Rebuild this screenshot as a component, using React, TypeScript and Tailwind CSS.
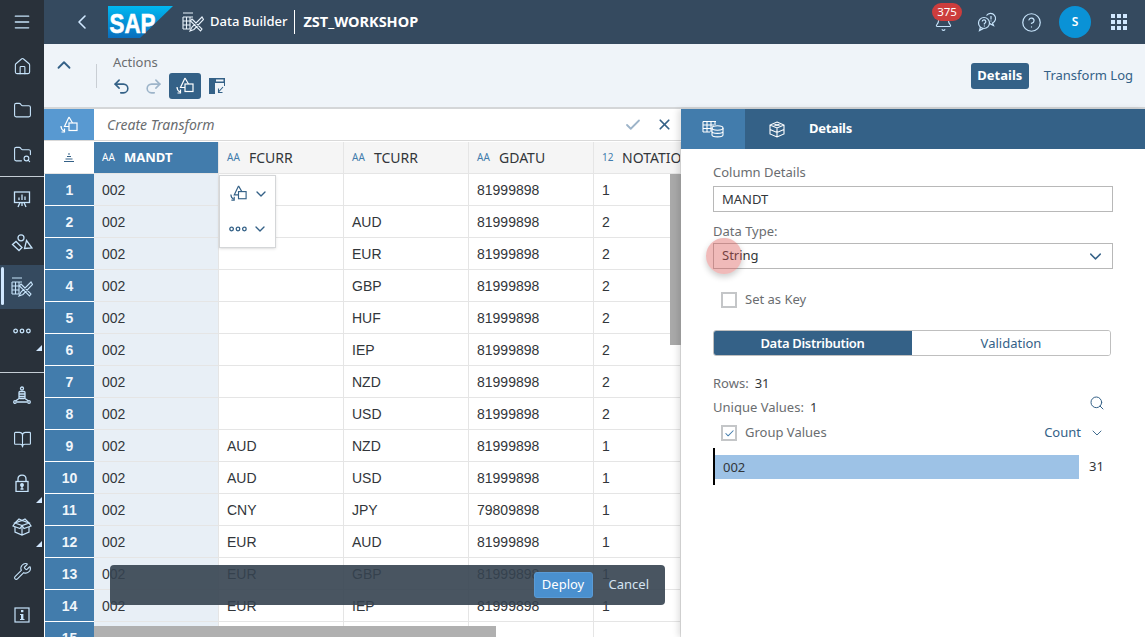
import React from 'react';
import {
  Menu, House, Folder, FolderSearch, BookOpen, Wrench,
  Bell, CircleHelp, Undo2, Redo2, ChevronUp, ChevronLeft, ChevronDown, Check, X, Search,
} from 'lucide-react';

const NAV = '#c6e3fa';
const BLUE = '#346187';

const ROWS = [
  ['', '', '81999898', '1'],
  ['', 'AUD', '81999898', '2'],
  ['', 'EUR', '81999898', '2'],
  ['', 'GBP', '81999898', '2'],
  ['', 'HUF', '81999898', '2'],
  ['', 'IEP', '81999898', '2'],
  ['', 'NZD', '81999898', '2'],
  ['', 'USD', '81999898', '2'],
  ['AUD', 'NZD', '81999898', '1'],
  ['AUD', 'USD', '81999898', '1'],
  ['CNY', 'JPY', '79809898', '1'],
  ['EUR', 'AUD', '81999898', '1'],
  ['EUR', 'GBP', '81999898', '1'],
  ['EUR', 'IEP', '81999898', '1'],
  ['', '', '', ''],
];

// triangle + square with the little arrow, used for the transform actions
function TransformIcon({ color, size = 20 }: { color: string; size?: number }) {
  return (
    <svg width={size} height={size} viewBox="0 0 20 20" fill="none" stroke={color} strokeWidth="1.2">
      <path d="M10 2 L5.5 11.5 H10 M10 2 L13.5 8" />
      <rect x="10" y="8" width="8" height="7.5" />
      <path d="M2 11 C2 13.5 3 15 5 16" />
      <path d="M5.5 13.5 V17 H2.5" />
    </svg>
  );
}

function DotsIcon({ color }: { color: string }) {
  return (
    <svg width="18" height="6" viewBox="0 0 18 6" fill="none" stroke={color} strokeWidth="1.3">
      <circle cx="2.6" cy="3" r="1.8" />
      <circle cx="9" cy="3" r="1.8" />
      <circle cx="15.4" cy="3" r="1.8" />
    </svg>
  );
}

function TableToolsIcon({ color }: { color: string }) {
  return (
    <svg width="22" height="20" viewBox="0 0 22 20" fill="none" stroke={color} strokeWidth="1.1">
      <path d="M1 1 H11 M1 5 H11 M1 9 H9 M1 13 H8 M1 17 H8 M1 5 V17 M4.5 5 V17 M8 5 V17" />
      <path d="M10 7 L20 17 L18.5 19 L8.5 9 Z M20 5 L10 15 L8 19 L12 17.5 L21.5 7.5 Z" />
    </svg>
  );
}

function NetworkIcon({ color }: { color: string }) {
  return (
    <svg width="18" height="18" viewBox="0 0 18 18" fill="none" stroke={color} strokeWidth="1.3">
      <circle cx="9" cy="2.5" r="1.5" />
      <rect x="6" y="5.5" width="6" height="7" rx="1" />
      <path d="M6 8 H12 M6 10.5 H12 M6 12.5 L2.5 15 M12 12.5 L15.5 15 M4 16 H14" />
      <circle cx="2" cy="16" r="1.3" />
      <circle cx="16" cy="16" r="1.3" />
    </svg>
  );
}

function BoardIcon({ color }: { color: string }) {
  return (
    <svg width="18" height="18" viewBox="0 0 18 18" fill="none" stroke={color} strokeWidth="1.3">
      <rect x="1.5" y="2" width="15" height="10.5" />
      <path d="M6 10 V7.5 M9 10 V4.5 M12 10 V6.5 M7 12.5 L5 17 M11 12.5 L13 17 M9 12.5 V16" />
    </svg>
  );
}

function ShapesIcon({ color }: { color: string }) {
  return (
    <svg width="22" height="18" viewBox="0 0 22 18" fill="none" stroke={color} strokeWidth="1.3">
      <circle cx="10" cy="3.8" r="3" />
      <path d="M1.5 10.5 L5 7.5 L11 13.5 L8 16.5 Z" />
      <path d="M15.5 6.5 L21 14 L13.5 14.5 Z" />
    </svg>
  );
}

function LockIcon({ color }: { color: string }) {
  return (
    <svg width="14" height="18" viewBox="0 0 14 18" fill="none" stroke={color} strokeWidth="1.3">
      <rect x="1" y="7.5" width="12" height="10" />
      <path d="M3 7.5 V5 C3 -0.2 11 -0.2 11 5 V7.5" />
      <circle cx="7" cy="11" r="1.3" fill={color} />
      <path d="M7 12 V15 M5.5 15 H8.5" />
    </svg>
  );
}

function BoxIcon({ color }: { color: string }) {
  return (
    <svg width="20" height="18" viewBox="0 0 20 18" fill="none" stroke={color} strokeWidth="1.2">
      <path d="M10 7.5 L3 5 L10 2.5 L17 5 Z" />
      <path d="M3 5 L1 8 L8 10.5 L10 7.5 L12 10.5 L19 8 L17 5" />
      <path d="M3 9 V14 L10 17 L17 14 V9 M10 8 V17" />
      <path d="M3 5 L7 1 L10 2.5 L13 1 L17 5" />
    </svg>
  );
}

function InfoBoxIcon({ color }: { color: string }) {
  return (
    <svg width="16" height="16" viewBox="0 0 16 16" fill="none">
      <rect x="1" y="1" width="14" height="14" stroke={color} strokeWidth="1.2" />
      <rect x="7" y="3" width="2.4" height="2.2" fill={color} />
      <path d="M6 7 H9.4 V12 H10.5 V13 H6 V12 H7 V8 H6 Z" fill={color} />
    </svg>
  );
}

function NavItem({ children, active, corner }: { children: React.ReactNode; active?: boolean; corner?: boolean }) {
  return (
    <div className={`relative h-11 flex items-center justify-center ${active ? 'bg-[#354a5f]' : ''}`}>
      {active && <div className="absolute left-[1px] top-[2px] bottom-[4px] w-[3px] rounded-sm bg-[#d1e8ff]" />}
      {children}
      {corner && <div className="absolute right-[2px] bottom-[2px] w-0 h-0 border-l-[6px] border-l-transparent border-b-[6px] border-b-[#d1e8ff]" />}
    </div>
  );
}

function Sidebar() {
  const p = { size: 19, color: NAV, strokeWidth: 1.4 };
  return (
    <div className="w-11 shrink-0 bg-[#29313a] flex flex-col">
      <NavItem><Menu size={20} color={NAV} strokeWidth={1.6} /></NavItem>
      <NavItem><House {...p} /></NavItem>
      <NavItem><Folder {...p} /></NavItem>
      <NavItem><FolderSearch {...p} /></NavItem>
      <div className="h-px bg-[#c4ccd4]" />
      <NavItem><BoardIcon color={NAV} /></NavItem>
      <NavItem><ShapesIcon color={NAV} /></NavItem>
      <NavItem active><TableToolsIcon color={NAV} /></NavItem>
      <NavItem corner><DotsIcon color={NAV} /></NavItem>
      <div className="h-[19px]" />
      <div className="h-px bg-[#c4ccd4]" />
      <NavItem><NetworkIcon color={NAV} /></NavItem>
      <NavItem><BookOpen {...p} /></NavItem>
      <NavItem corner><LockIcon color={NAV} /></NavItem>
      <NavItem corner><BoxIcon color={NAV} /></NavItem>
      <NavItem><Wrench {...p} /></NavItem>
      <NavItem><InfoBoxIcon color={NAV} /></NavItem>
    </div>
  );
}

function ShellBar() {
  return (
    <div className="h-11 shrink-0 bg-[#354a5f] flex items-center text-white relative">
      <div className="w-[64px] flex justify-end"><ChevronLeft size={24} color="#d1e8ff" strokeWidth={1.6} className="mr-[14px]" /></div>
      <svg width="65" height="32" viewBox="0 0 65 32">
        <defs>
          <linearGradient id="sap" x1="0" y1="0" x2="0" y2="1">
            <stop offset="0" stopColor="#00b8f1" />
            <stop offset="1" stopColor="#0a6ebd" />
          </linearGradient>
        </defs>
        <polygon points="0,0 65,0 32,32 0,32" fill="url(#sap)" />
        <text x="1.5" y="27" fill="#fff" stroke="#fff" strokeWidth="0.6" fontFamily="Liberation Sans" fontWeight="700" fontSize="27" textLength="46" lengthAdjust="spacingAndGlyphs">SAP</text>
      </svg>
      <div className="ml-[9px]"><TableToolsIcon color="#e8f2fb" /></div>
      <span className="ml-[6px] text-[13px] font-medium">Data Builder</span>
      <div className="ml-[7px] w-px h-6 bg-white" />
      <span className="ml-2 text-[14.5px] font-bold">ZST_WORKSHOP</span>
      <div className="ml-auto flex items-center pr-[4px]">
        <div className="relative w-11 flex justify-center">
          <Bell size={19} color={NAV} strokeWidth={1.4} />
          <div className="absolute left-[11px] top-[-10px] w-[30px] h-[18px] rounded-[9px] bg-[#cc3d3d] text-[11.5px] leading-[18px] text-center text-white">375</div>
        </div>
        <div className="w-11 flex justify-center">
          <svg width="20" height="20" viewBox="0 0 20 20" fill="none" stroke={NAV} strokeWidth="1.2">
            <circle cx="7" cy="11" r="5.5" />
            <path d="M3.5 15 L2.5 18.5 L6.5 16.4" />
            <path d="M9.5 3.5 A5 5 0 1 1 15.5 11 L16.5 13.5 L12.8 11.6" />
            <path d="M5.2 9.6 A1.8 1.8 0 1 1 7.4 11.4 V12.6 M7.4 13.6 V14.4" />
            <path d="M14 4 V7.5 M14 8.6 V9.4" />
          </svg>
        </div>
        <div className="w-11 flex justify-center"><CircleHelp size={21} color={NAV} strokeWidth={1.4} /></div>
        <div className="w-11 flex justify-center">
          <div className="w-8 h-8 rounded-full bg-[#0a92d6] text-[12px] font-semibold flex items-center justify-center">S</div>
        </div>
        <div className="w-11 grid gap-[2px] grid-cols-[repeat(3,4px)] place-content-center">
          {Array.from({ length: 9 }).map((_, i) => <div key={i} className="w-1 h-1 bg-[#d1e8ff]" />)}
        </div>
      </div>
    </div>
  );
}

function Toolbar() {
  return (
    <div className="h-[65px] shrink-0 bg-[#eff4f9] border-b-2 border-[#d4d6d8] flex pl-[9px] pr-3">
      <div className="w-[22px] pt-[10px]"><ChevronUp size={22} color={BLUE} strokeWidth={2} /></div>
      <div className="ml-[21px] mt-5 w-px h-6 bg-[#c9ced4]" />
      <div className="ml-4 pt-[9px]">
        <div className="text-[13px] leading-[18px] text-[#6a6d70]">Actions</div>
        <div className="flex items-center h-[26px] mt-[2px] gap-0">
          <div className="w-8 flex justify-center -ml-2"><Undo2 size={19} color={BLUE} strokeWidth={2} /></div>
          <div className="w-8 flex justify-center"><Redo2 size={19} color="#9db4c9" strokeWidth={2} /></div>
          <div className="w-8 h-[26px] rounded-[3px] bg-[#346187] flex items-center justify-center"><TransformIcon color="#fff" /></div>
          <div className="w-8 flex justify-center">
            <svg width="18" height="18" viewBox="0 0 18 18" fill="none">
              <rect x="1" y="1" width="6" height="16" fill={BLUE} />
              <rect x="1" y="1" width="16" height="5" fill={BLUE} />
              <rect x="8" y="2.5" width="7.5" height="2" fill="#eff4f9" />
              <path d="M16.5 6 V9" stroke={BLUE} strokeWidth="1" />
              <path d="M15 10 L10.5 15 M10.5 11.5 V15.5 H14.5" stroke={BLUE} strokeWidth="1.1" />
            </svg>
          </div>
        </div>
      </div>
      <div className="ml-auto flex items-center gap-[15px] pt-[1px]">
        <div className="w-[58px] h-[26px] rounded-[3px] bg-[#346187] text-white text-[13px] font-bold flex items-center justify-center">Details</div>
        <span className="text-[#346187] text-[13px]">Transform Log</span>
      </div>
    </div>
  );
}

function HeadCell({ tag, label, active, width }: { tag: string; label: string; active?: boolean; width: string }) {
  return (
    <div className={`${width} shrink-0 h-full flex items-center pl-2 border-r border-[#e5e5e5] overflow-hidden whitespace-nowrap ${active ? 'bg-[#427cac] text-white' : 'bg-[#f5f5f5] text-[#32363a]'}`}>
      <span className={`w-[17px] shrink-0 text-[10px] ${active ? 'text-white' : 'text-[#427cac]'}`}>{tag}</span>
      <span className={`${tag === '12' ? 'ml-[3px]' : 'ml-[5px]'} ${active ? 'text-[13px] font-bold' : 'text-[14px]'}`}>{label}</span>
    </div>
  );
}

function DataTable() {
  return (
    <div className="flex-1 min-h-0 relative overflow-hidden">
      <div className="h-[32px] flex border-b border-[#d9d9d9] bg-white">
        <div className="w-[50px] bg-[#5899d1] flex items-center justify-center"><TransformIcon color="#fff" /></div>
        <div className="flex-1 flex items-center pl-[13px] text-[14px] italic text-[#6a6d70]">Create Transform</div>
        <div className="w-[32px] flex items-center"><Check size={18} color="#9db4c9" strokeWidth={2.4} /></div>
        <div className="w-[25px] flex items-center"><X size={17} color={BLUE} strokeWidth={2.4} /></div>
      </div>
      <div className="h-[33px] flex border-b border-[#e5e5e5] pt-[1px]">
        <div className="w-[50px] shrink-0 flex items-center justify-center bg-white">
          <svg width="12" height="10" viewBox="0 0 12 10" stroke={BLUE} strokeWidth="1"><path d="M5 1 H7 M4 3.5 H8 M2.5 6 H9.5 M1 8.5 H11" /></svg>
        </div>
        <HeadCell tag="AA" label="MANDT" active width="w-[125px]" />
        <HeadCell tag="AA" label="FCURR" width="w-[125px]" />
        <HeadCell tag="AA" label="TCURR" width="w-[125px]" />
        <HeadCell tag="AA" label="GDATU" width="w-[125px]" />
        <HeadCell tag="12" label="NOTATION" width="flex-1" />
      </div>
      {ROWS.map((r, i) => (
        <div key={i} className="h-8 flex text-[14px] text-[#32363a] font-['Liberation_Sans',sans-serif]">
          <div className="w-[50px] shrink-0 pl-[1px]">
            <div className="h-[31px] pt-[1px] bg-[#427cac] text-[#f0f5fa] font-bold text-[14px] flex items-center justify-center">{i + 1}</div>
          </div>
          <div className="w-[125px] shrink-0 bg-[#e8eff6] border-r border-b border-[#e5e5e5] pl-2 leading-[32px]">002</div>
          {r.map((c, j) => (
            <div key={j} className={`${j === 3 ? 'flex-1' : 'w-[125px] shrink-0'} border-r border-b border-[#e5e5e5] pl-2 leading-[32px]`}>{c}</div>
          ))}
        </div>
      ))}

      {/* scrollbars lie over the grid */}
      <div className="absolute right-0 top-[65px] w-[11px] h-[171px] bg-[#a9a9a9]" />
      <div className="absolute left-[50px] bottom-0 w-[402px] h-[11px] bg-[#b0b0b0]" />

      {/* column action popup */}
      <div className="absolute left-[175px] top-[66px] w-[57px] h-[73px] bg-white border border-[#d4d6d8] shadow flex flex-col">
        <div className="h-9 flex items-center pl-[9px] gap-[5px]">
          <TransformIcon color={BLUE} size={19} />
          <ChevronDown size={16} color={BLUE} strokeWidth={2} />
        </div>
        <div className="h-9 flex items-center pl-[9px] gap-[5px]">
          <DotsIcon color={BLUE} />
          <ChevronDown size={16} color={BLUE} strokeWidth={2} />
        </div>
      </div>

      {/* deploy bar */}
      <div className="absolute left-[66px] top-[456px] w-[555px] h-10 rounded-[4px] bg-[#354350]/90 flex items-center justify-end pr-[16px] text-[13px]">
        <div className="w-[59px] h-[26px] rounded-[3px] bg-[#4a90cf] border border-[#5a9bd6] text-white flex items-center justify-center">Deploy</div>
        <span className="ml-4 text-[#d5e4f2]">Cancel</span>
      </div>
    </div>
  );
}

function Checkbox({ checked }: { checked?: boolean }) {
  return (
    <div className="w-4 h-4 border-2 border-[#c4c6c8] bg-white flex items-center justify-center">
      {checked && <Check size={11} color="#427cac" strokeWidth={2.2} />}
    </div>
  );
}

function DetailsPanel() {
  return (
    <div className="w-[464px] shrink-0 bg-white flex flex-col relative shadow-[-3px_0_6px_rgba(0,0,0,0.12)] text-[13px] text-[#6a6d70]">
      <div className="h-10 shrink-0 bg-[#346187] flex items-center text-white">
        <div className="w-16 h-full bg-[#427cac] flex items-center justify-center">
          <svg width="22" height="18" viewBox="0 0 22 18" fill="none" stroke="#fff" strokeWidth="1.1">
            <path d="M1 1.5 H14 M1 5 H12 M1 8.5 H9 M1 12 H8 M1 1.5 V12 M5 1.5 V12 M9 1.5 V12 M13 1.5 V5" />
            <ellipse cx="15.5" cy="8" rx="5.5" ry="2.2" />
            <path d="M10 8 V15 C10 17.5 21 17.5 21 15 V8 M10 11.5 C10 14 21 14 21 11.5" />
          </svg>
        </div>
        <div className="w-16 flex justify-center">
          <svg width="16" height="17" viewBox="0 0 16 17" fill="none" stroke="#fff" strokeWidth="1.1">
            <path d="M8 1 L15 4 V13 L8 16 L1 13 V4 Z M1 4 L8 7 L15 4 M8 7 V16 M4.5 2.5 L11.5 5.5 M11.5 2.5 L4.5 5.5 M1 8.5 L8 11.5 L15 8.5" />
          </svg>
        </div>
        <span className="text-[13px] font-bold tracking-[-0.3px]">Details</span>
      </div>
      <div className="pl-8 pr-8 pt-[14px] flex flex-col">
        <div className="leading-[18px]">Column Details</div>
        <div className="mt-[5px] h-[26px] border border-[#b8b8b8] pl-2 text-[#32363a] leading-[24px]">MANDT</div>
        <div className="mt-[10px] leading-[18px]">Data Type:</div>
        <div className="relative mt-[3px] h-[26px] border border-[#b8b8b8] pl-2 text-[#32363a] flex items-center justify-between pr-[7px]">
          String
          <ChevronDown size={19} color={BLUE} strokeWidth={1.8} />
          <div className="absolute left-[-8px] top-[-6px] w-9 h-9 rounded-full bg-[#d9534f]/40 shadow-[0_3px_6px_rgba(0,0,0,0.2)]" />
        </div>
        <div className="mt-[23px] pl-2 flex items-center gap-2 h-4">
          <Checkbox /><span>Set as Key</span>
        </div>
        <div className="mt-[22px] w-[398px] h-[26px] flex rounded-[3px] overflow-hidden border border-[#bfbfbf]">
          <div className="w-[199px] -m-px mr-0 pt-[1px] bg-[#346187] text-white font-semibold tracking-[-0.3px] flex items-center justify-center">Data Distribution</div>
          <div className="flex-1 bg-white pt-[1px] text-[#346187] flex items-center justify-center">Validation</div>
        </div>
        <div className="mt-[18px] leading-[18px]">Rows:<span className="ml-[6px] text-[#32363a]">31</span></div>
        <div className="mt-[6px] leading-[18px] flex items-center justify-between pr-2">
          <span>Unique Values:<span className="ml-[6px] text-[#32363a]">1</span></span>
          <Search size={16} color={BLUE} strokeWidth={1.5} className="-mt-2" />
        </div>
        <div className="mt-[7px] pl-2 pr-[8px] flex items-center h-5">
          <Checkbox checked /><span className="ml-2">Group Values</span>
          <span className="ml-auto text-[#346187]">Count</span>
          <ChevronDown size={16} color={BLUE} strokeWidth={1.4} className="ml-2" />
        </div>
        <div className="mt-[5px] h-[37px] flex items-center border-l-2 border-black">
          <div className="w-[364px] h-6 bg-[#9dc2e6] pl-2 leading-6 text-[#32363a]">002</div>
          <span className="ml-[10px] text-[#32363a]">31</span>
        </div>
      </div>
    </div>
  );
}

export default function App() {
  return (
    <div className="w-[1145px] h-[637px] overflow-hidden flex font-['Noto_Sans',sans-serif]">
      <Sidebar />
      <div className="flex-1 min-w-0 flex flex-col">
        <ShellBar />
        <Toolbar />
        <div className="flex-1 min-h-0 flex">
          <DataTable />
          <DetailsPanel />
        </div>
      </div>
    </div>
  );
}
